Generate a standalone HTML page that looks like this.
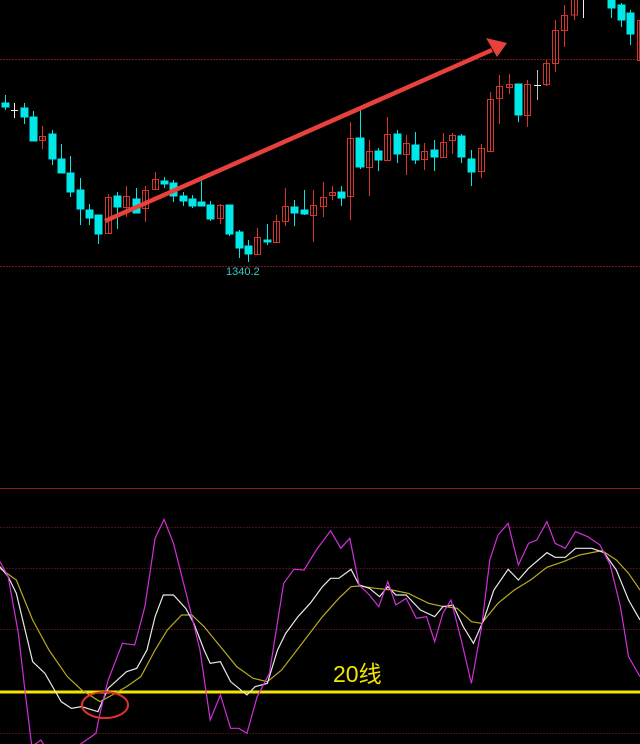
<!DOCTYPE html>
<html><head><meta charset="utf-8"><style>
html,body{margin:0;padding:0;background:#000;width:640px;height:744px;overflow:hidden}
svg{position:absolute;left:0;top:0}
</style></head><body>
<svg width="640" height="744" viewBox="0 0 640 744" style="position:absolute;left:0;top:0">
<g stroke="#7a1818" stroke-width="1">
<line x1="0" y1="59.5" x2="640" y2="59.5" stroke-dasharray="2 1"/>
<line x1="0" y1="266.5" x2="640" y2="266.5" stroke-dasharray="2 1"/>
<line x1="0" y1="488.5" x2="640" y2="488.5" stroke="#8a1c1c"/>
<line x1="0" y1="527.5" x2="640" y2="527.5" stroke-dasharray="2 1" stroke="#4a1010"/>
<line x1="0" y1="568.5" x2="640" y2="568.5" stroke-dasharray="2 1" stroke="#4a1010"/>
<line x1="0" y1="629.5" x2="640" y2="629.5" stroke-dasharray="2 1" stroke="#4a1010"/>
<line x1="0" y1="733.5" x2="640" y2="733.5" stroke-dasharray="2 1" stroke="#4a1010"/>
</g>
<g id="c" stroke-width="1">
<!-- cyan: wick then body -->
<g stroke="#00e8e8" fill="#00e8e8">
<line x1="5.5" y1="95" x2="5.5" y2="110"/><rect x="2" y="103" width="7" height="4"/>
<line x1="24.5" y1="103" x2="24.5" y2="124"/><rect x="21" y="108" width="7" height="9"/>
<line x1="33.5" y1="111" x2="33.5" y2="141"/><rect x="30" y="117" width="7" height="24"/>
<line x1="52.5" y1="130" x2="52.5" y2="165"/><rect x="49" y="134" width="7" height="25"/>
<line x1="61.5" y1="144" x2="61.5" y2="173"/><rect x="58" y="159" width="7" height="14"/>
<line x1="70.5" y1="156" x2="70.5" y2="197"/><rect x="67" y="173" width="7" height="19"/>
<line x1="80.5" y1="178" x2="80.5" y2="225"/><rect x="77" y="190" width="7" height="19"/>
<line x1="89.5" y1="204" x2="89.5" y2="225"/><rect x="86" y="210" width="7" height="8"/>
<line x1="98.5" y1="215" x2="98.5" y2="244"/><rect x="95" y="215" width="7" height="19"/>
<line x1="117.5" y1="192" x2="117.5" y2="229"/><rect x="114" y="196" width="7" height="11"/>
<line x1="136.5" y1="188" x2="136.5" y2="212"/><rect x="133" y="199" width="7" height="14"/>
<line x1="164.5" y1="177" x2="164.5" y2="188"/><rect x="161" y="181" width="7" height="3"/>
<line x1="173.5" y1="180" x2="173.5" y2="202"/><rect x="170" y="183" width="7" height="13"/>
<line x1="183.5" y1="192" x2="183.5" y2="206"/><rect x="180" y="196" width="7" height="5"/>
<line x1="192.5" y1="195" x2="192.5" y2="208"/><rect x="189" y="199" width="7" height="7"/>
<line x1="201.5" y1="180" x2="201.5" y2="206"/><rect x="198" y="202" width="7" height="4"/>
<line x1="210.5" y1="201" x2="210.5" y2="221"/><rect x="207" y="205" width="7" height="14"/>
<line x1="229.5" y1="205" x2="229.5" y2="236"/><rect x="226" y="205" width="7" height="29"/>
<line x1="239.5" y1="230" x2="239.5" y2="258"/><rect x="236" y="232" width="7" height="16"/>
<line x1="248.5" y1="240" x2="248.5" y2="262"/><rect x="245" y="246" width="7" height="8"/>
<line x1="267.5" y1="224" x2="267.5" y2="245"/><rect x="264" y="240" width="7" height="2"/>
<line x1="294.5" y1="200" x2="294.5" y2="226"/><rect x="291" y="207" width="7" height="6"/>
<line x1="304.5" y1="190" x2="304.5" y2="215"/><rect x="301" y="210" width="7" height="4"/>
<line x1="341.5" y1="186" x2="341.5" y2="206"/><rect x="338" y="192" width="7" height="6"/>
<line x1="360.5" y1="110" x2="360.5" y2="169"/><rect x="356" y="138" width="8" height="29"/>
<line x1="378.5" y1="148" x2="378.5" y2="171"/><rect x="375" y="151" width="7" height="9"/>
<line x1="397.5" y1="130" x2="397.5" y2="163"/><rect x="394" y="134" width="7" height="20"/>
<line x1="415.5" y1="132" x2="415.5" y2="164"/><rect x="412" y="145" width="7" height="15"/>
<line x1="434.5" y1="140" x2="434.5" y2="171"/><rect x="431" y="150" width="7" height="7"/>
<line x1="461.5" y1="134" x2="461.5" y2="163"/><rect x="458" y="136" width="7" height="21"/>
<line x1="471.5" y1="150" x2="471.5" y2="186"/><rect x="468" y="159" width="7" height="13"/>
<line x1="518.5" y1="84" x2="518.5" y2="122"/><rect x="515" y="84" width="7" height="31"/>
<line x1="611.5" y1="0" x2="611.5" y2="18"/><rect x="608" y="0" width="7" height="8"/>
<line x1="621.5" y1="3" x2="621.5" y2="27"/><rect x="618" y="5" width="7" height="15"/>
<line x1="630.5" y1="10" x2="630.5" y2="45"/><rect x="627" y="13" width="7" height="21"/>
</g>
<g stroke="#d8342e" fill="none">
<line x1="42.5" y1="126" x2="42.5" y2="149"/><rect x="39.5" y="136.5" width="6" height="4"/>
<line x1="108.5" y1="194" x2="108.5" y2="234"/><rect x="105.5" y="197.5" width="6" height="36"/>
<line x1="126.5" y1="186" x2="126.5" y2="217"/><rect x="123.5" y="196.5" width="6" height="11"/>
<line x1="145.5" y1="186" x2="145.5" y2="222"/><rect x="142.5" y="190.5" width="6" height="18"/>
<line x1="155.5" y1="172" x2="155.5" y2="190"/><rect x="152.5" y="179.5" width="6" height="10"/>
<line x1="220.5" y1="204" x2="220.5" y2="224"/><rect x="217.5" y="205.5" width="6" height="13"/>
<line x1="257.5" y1="228" x2="257.5" y2="255"/><rect x="254.5" y="237.5" width="6" height="17"/>
<line x1="276.5" y1="215" x2="276.5" y2="243"/><rect x="273.5" y="221.5" width="6" height="21"/>
<line x1="285.5" y1="188" x2="285.5" y2="226"/><rect x="282.5" y="206.5" width="6" height="15"/>
<line x1="313.5" y1="190" x2="313.5" y2="242"/><rect x="310.5" y="205.5" width="6" height="10"/>
<line x1="323.5" y1="182" x2="323.5" y2="217"/><rect x="320.5" y="197.5" width="6" height="9"/>
<line x1="332.5" y1="186" x2="332.5" y2="200"/><rect x="329.5" y="192.5" width="6" height="3"/>
<line x1="350.5" y1="122" x2="350.5" y2="220"/><rect x="347.5" y="138.5" width="6" height="58"/>
<line x1="369.5" y1="140" x2="369.5" y2="196"/><rect x="366.5" y="151.5" width="6" height="16"/>
<line x1="387.5" y1="117" x2="387.5" y2="161"/><rect x="384.5" y="134.5" width="6" height="26"/>
<line x1="406.5" y1="135" x2="406.5" y2="175"/><rect x="403.5" y="143.5" width="6" height="11"/>
<line x1="424.5" y1="143" x2="424.5" y2="170"/><rect x="421.5" y="151.5" width="6" height="8"/>
<line x1="443.5" y1="133" x2="443.5" y2="158"/><rect x="440.5" y="142.5" width="6" height="15"/>
<line x1="452.5" y1="133" x2="452.5" y2="154"/><rect x="449.5" y="135.5" width="6" height="5"/>
<line x1="481.5" y1="144" x2="481.5" y2="178"/><rect x="478.5" y="148.5" width="6" height="23"/>
<line x1="490.5" y1="92" x2="490.5" y2="152"/><rect x="487.5" y="99.5" width="6" height="52"/>
<line x1="499.5" y1="75" x2="499.5" y2="124"/><rect x="496.5" y="86.5" width="6" height="12"/>
<line x1="509.5" y1="74" x2="509.5" y2="94"/><rect x="506.5" y="84.5" width="6" height="3"/>
<line x1="527.5" y1="80" x2="527.5" y2="127"/><rect x="524.5" y="84.5" width="6" height="31"/>
<line x1="546.5" y1="60" x2="546.5" y2="86"/><rect x="543.5" y="63.5" width="6" height="21"/>
<line x1="555.5" y1="20" x2="555.5" y2="72"/><rect x="552.5" y="30.5" width="6" height="33"/>
<line x1="564.5" y1="5" x2="564.5" y2="47"/><rect x="561.5" y="15.5" width="6" height="15"/>
<line x1="574.5" y1="0" x2="574.5" y2="20"/><rect x="571.5" y="-1" width="6" height="16"/>
<line x1="639.5" y1="20" x2="639.5" y2="60"/><rect x="637.5" y="20.5" width="6" height="40"/>
</g>
<g stroke="#eee">
<line x1="14.5" y1="103" x2="14.5" y2="118"/><line x1="11" y1="110.5" x2="18" y2="110.5"/>
<line x1="537.5" y1="70" x2="537.5" y2="100" stroke="#bbb"/><line x1="534" y1="85.5" x2="541" y2="85.5"/>
<line x1="583.5" y1="0" x2="583.5" y2="18"/>
</g>
</g>
<!-- arrow -->
<line x1="105" y1="221" x2="492" y2="50" stroke="#e8403c" stroke-width="4.5"/>
<polygon points="507,43 486,38 497,57" fill="#e8403c"/>
<text x="226" y="275" fill="#39c8c8" font-family="Liberation Sans, sans-serif" font-size="11">1340.2</text>
<!-- yellow 20 line -->
<line x1="0" y1="692" x2="640" y2="692" stroke="#f2e600" stroke-width="3"/>
<text x="333" y="682" fill="#f2e600" font-family="Liberation Sans, 'Noto Sans CJK SC', sans-serif" font-size="23">20线</text>
</svg>
<svg width="640" height="264" viewBox="0 0 1568 792" preserveAspectRatio="none" style="position:absolute;left:0;top:480px">
<g fill="none" stroke-width="1.2" vector-effect="non-scaling-stroke">
<polyline vector-effect="non-scaling-stroke" stroke="#b8aa20" points="0,265 40,300 80,420 120,510 165,590 200,630 245,665 275,645 310,620 345,590 380,510 410,450 445,405 470,405 500,440 540,500 580,560 620,595 655,605 690,570 740,490 790,410 830,355 860,320 880,318 920,325 960,330 1000,340 1050,370 1080,378 1120,385 1155,425 1180,430 1220,370 1260,330 1300,300 1340,262 1380,245 1420,225 1475,212 1510,240 1540,280 1568,330"/>
<polyline vector-effect="non-scaling-stroke" stroke="#e8e8e8" points="0,260 20,290 40,340 80,545 110,580 150,665 175,685 200,680 240,695 265,625 310,575 335,565 360,510 380,410 400,345 425,345 455,385 475,430 500,510 515,550 540,545 565,605 605,645 625,620 655,610 680,510 700,460 730,410 760,370 790,320 810,295 830,295 860,268 880,315 905,325 930,350 950,320 970,345 995,345 1030,390 1065,410 1085,380 1110,375 1135,440 1160,490 1185,420 1210,330 1245,268 1270,300 1295,265 1340,218 1360,232 1385,232 1410,205 1450,205 1480,218 1510,270 1540,360 1568,420"/>
<polyline vector-effect="non-scaling-stroke" stroke="#d030d8" points="0,245 20,290 45,460 60,620 78,800 100,780 110,800 190,800 200,790 235,760 245,700 265,600 300,490 330,495 355,380 380,175 402,118 425,190 460,360 490,510 515,720 540,645 565,745 585,745 605,760 630,650 660,580 695,310 720,268 745,270 775,210 810,152 835,205 857,175 880,315 905,345 928,380 950,305 970,375 995,355 1020,415 1045,410 1065,485 1085,400 1105,360 1130,480 1155,610 1180,440 1200,240 1220,165 1245,130 1270,255 1295,190 1315,180 1340,125 1360,190 1385,205 1410,155 1440,170 1470,195 1495,255 1520,380 1540,530 1568,590"/>
</g>
</svg>
<svg width="640" height="744" style="position:absolute;left:0;top:0">
<ellipse cx="105" cy="705" rx="23" ry="13" fill="none" stroke="#e03030" stroke-width="2"/>
</svg>
</body></html>
